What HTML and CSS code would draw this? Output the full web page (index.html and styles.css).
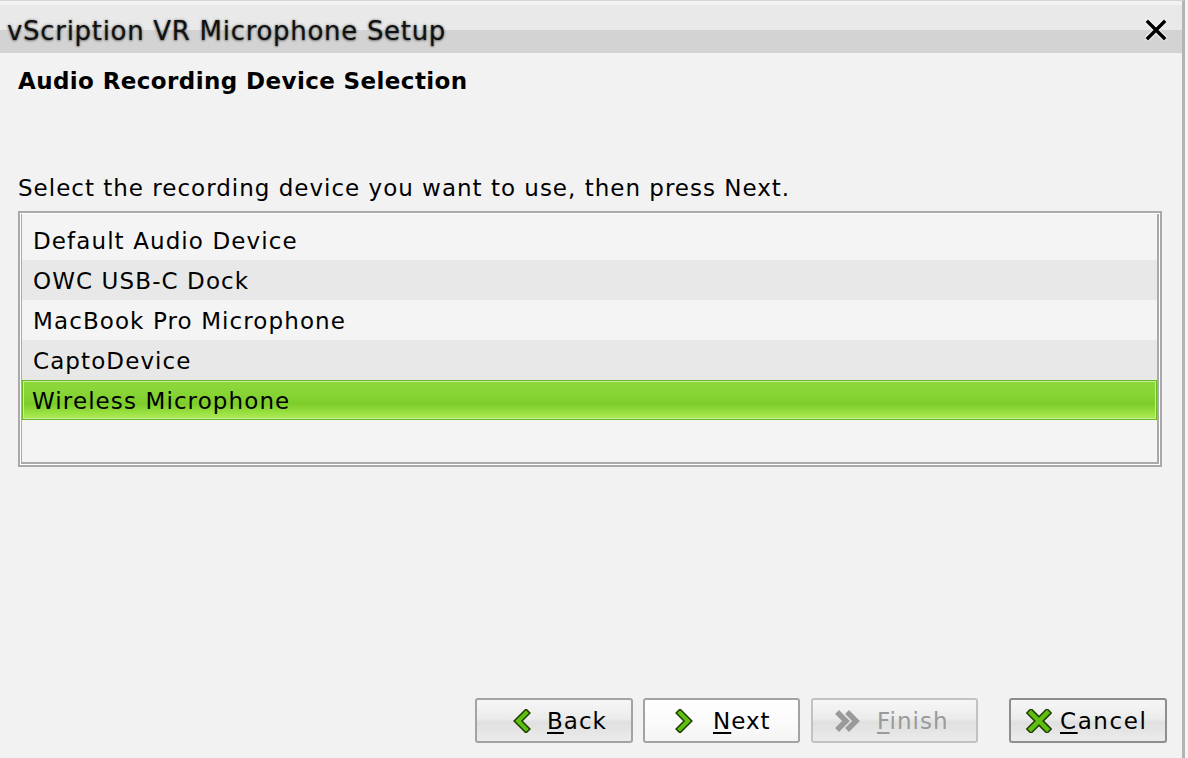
FILE: index.html
```html
<!DOCTYPE html>
<html>
<head>
<meta charset="utf-8">
<link rel="stylesheet" href="styles.css">
</head>
<body>
<div class="window">
  <div class="titlebar">
    <span class="title">vScription VR Microphone Setup</span>
    <svg class="close" width="22" height="22" viewBox="0 0 22 22">
      <path d="M3 3 L19 19 M19 3 L3 19" stroke="#fff" stroke-width="6" stroke-linecap="square" opacity="0.6"/>
      <path d="M3 3 L19 19 M19 3 L3 19" stroke="#000" stroke-width="3.4" stroke-linecap="square"/>
    </svg>
  </div>
  <div class="content">
    <h1 class="heading">Audio Recording Device Selection</h1>
    <p class="prompt">Select the recording device you want to use, then press Next.</p>
    <div class="listbox">
      <div class="list">
        <div class="row">Default Audio Device</div>
        <div class="row alt">OWC USB-C Dock</div>
        <div class="row">MacBook Pro Microphone</div>
        <div class="row alt">CaptoDevice</div>
        <div class="row selected">Wireless Microphone</div>
      </div>
    </div>
    <div class="buttons">
      <button class="btn back">
        <svg width="18" height="24" viewBox="0 0 18 24"><polyline points="13,4 5,12 13,20" fill="none" stroke="#1f3d00" stroke-width="7" stroke-linejoin="miter" stroke-linecap="square"/><polyline points="13,4 5,12 13,20" fill="none" stroke="#5fbf10" stroke-width="4" stroke-linejoin="miter" stroke-linecap="square"/></svg>
        <span><u>B</u>ack</span>
      </button>
      <button class="btn next">
        <svg width="18" height="24" viewBox="0 0 18 24"><polyline points="5,4 13,12 5,20" fill="none" stroke="#1f3d00" stroke-width="7" stroke-linejoin="miter" stroke-linecap="square"/><polyline points="5,4 13,12 5,20" fill="none" stroke="#5fbf10" stroke-width="4" stroke-linejoin="miter" stroke-linecap="square"/></svg>
        <span><u>N</u>ext</span>
      </button>
      <button class="btn finish" disabled>
        <svg width="28" height="22" viewBox="0 0 28 22"><polyline points="4,4 11,11 4,18" fill="none" stroke="#9a9a9a" stroke-width="5.5" stroke-linecap="square"/><polyline points="14,4 21,11 14,18" fill="none" stroke="#9a9a9a" stroke-width="5.5" stroke-linecap="square"/></svg>
        <span><u>F</u>inish</span>
      </button>
      <button class="btn cancel">
        <svg width="26" height="24" viewBox="0 0 26 24"><path d="M5 4 L21 20 M21 4 L5 20" stroke="#1f3d00" stroke-width="7.5" stroke-linecap="square"/><path d="M5 4 L21 20 M21 4 L5 20" stroke="#5fbf10" stroke-width="4.5" stroke-linecap="square"/></svg>
        <span><u>C</u>ancel</span>
      </button>
    </div>
  </div>
</div>
</body>
</html>
```
FILE: styles.css
```css
html, body {
  margin: 0;
  padding: 0;
  background: #f4f4f4;
}
body {
  font-family: "DejaVu Sans", "Noto Sans", sans-serif;
  color: #000;
}
.window {
  width: 1182px;
  height: 757px;
  border-top: 1px solid #d6d6d6;
  border-right: 3px solid #b4b4b4;
  background: #f2f2f2;
  display: flex;
  flex-direction: column;
}
.titlebar {
  margin-top: 4px;
  height: 48px;
  background: linear-gradient(to bottom, #e9e9e9 0, #e9e9e9 52%, #d3d3d3 52%, #d3d3d3 100%);
  display: flex;
  align-items: center;
  justify-content: space-between;
  padding: 0 15px 0 7px;
}
.title {
  font-size: 26px;
  color: #111;
  letter-spacing: 0.7px;
  margin-top: 3px;
  text-shadow: 0 0 3px rgba(0,0,0,0.45), 0 1px 2px rgba(0,0,0,0.3);
}
.close {
  display: block;
  margin-top: 2px;
}
.content {
  flex: 1;
  display: flex;
  flex-direction: column;
  padding: 0 15px 15px 18px;
}
.heading {
  margin: 14px 0 0 0;
  font-size: 23px;
  font-weight: bold;
  letter-spacing: 0.4px;
  line-height: 28px;
}
.prompt {
  margin: 80px 0 0 0;
  font-size: 23px;
  letter-spacing: 1px;
  line-height: 26px;
}
.listbox {
  margin-top: 10px;
  height: 250px;
  border: 2px solid #a9a9a9;
  padding: 1px;
  background: #fff;
  width: 1138px;
}
.list {
  height: 100%;
  border: 2px solid #a9a9a9;
  border-left: 1px solid #a9a9a9;
  border-top: none;
  background: #f4f4f4;
  padding-top: 6px;
  box-sizing: border-box;
}
.row {
  height: 40px;
  line-height: 42px;
  padding-left: 11px;
  font-size: 23px;
  letter-spacing: 1.1px;
}
.row.alt {
  background: #e8e8e8;
}
.row.selected {
  padding-left: 9px;
  height: 38px;
  line-height: 40px;
  border: 1px solid #68b822;
  box-shadow: inset 0 0 0 1px #c6ee9a;
  background: linear-gradient(to bottom, #8fd83c 0%, #84d232 45%, #7ccc2a 60%, #9ae242 85%, #b2ea5c 100%);
}
.buttons {
  margin-top: auto;
  display: flex;
  justify-content: flex-end;
  align-items: center;
}
.btn {
  height: 45px;
  box-sizing: border-box;
  border: 2px solid #a3a3a3;
  border-radius: 3px;
  background: linear-gradient(to bottom, #f6f6f6 0%, #ececec 45%, #e0e0e0 55%, #ebebeb 100%);
  font-family: "DejaVu Sans", "Noto Sans", sans-serif;
  font-size: 23px;
  letter-spacing: 1px;
  color: #000;
  display: flex;
  align-items: center;
  justify-content: flex-start;
  padding: 0;
}
.btn u {
  text-decoration-thickness: 2px;
  text-underline-offset: 3px;
}
.btn svg {
  display: block;
}
.back {
  width: 158px;
  padding-left: 36px;
  gap: 16px;
}
.next {
  width: 157px;
  margin-left: 10px;
  padding-left: 30px;
  gap: 20px;
  background: linear-gradient(to bottom, #ffffff 0%, #fbfbfb 50%, #f4f4f4 100%);
}
.finish {
  width: 167px;
  margin-left: 11px;
  padding-left: 22px;
  gap: 14px;
  color: #9a9a9a;
  border-color: #c2c2c2;
}
.cancel {
  width: 158px;
  margin-left: 31px;
  padding-left: 15px;
  gap: 8px;
  letter-spacing: 1.6px;
  border-color: #8e8e8e;
}
```
